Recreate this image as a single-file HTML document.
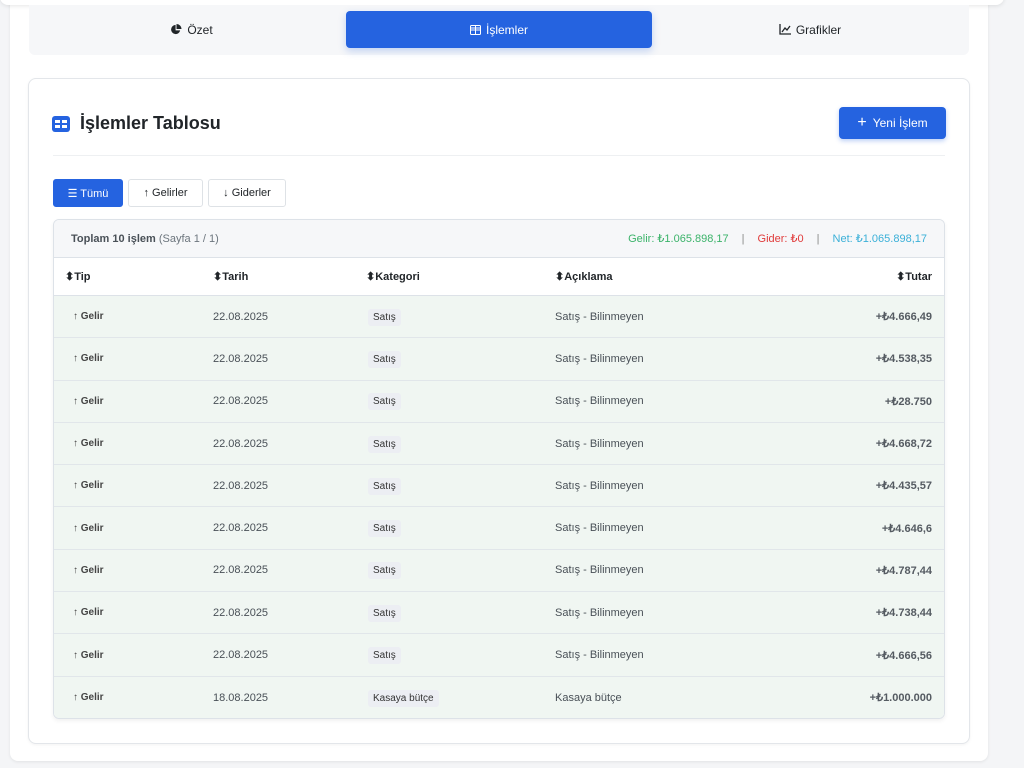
<!DOCTYPE html>
<html><head><meta charset="utf-8"><style>
*{box-sizing:border-box;margin:0;padding:0}
body{width:1024px;height:768px;background:#f4f5f7;font-family:"Liberation Sans",sans-serif;position:relative;overflow:hidden;color:#212529}
.topcard{position:absolute;left:0;top:-10px;width:1004px;height:15px;background:#fff;border-radius:0 0 8px 8px;box-shadow:0 1px 4px rgba(0,0,0,.1)}
.outer{position:absolute;left:10px;top:0;width:978px;height:761px;background:#fff;border-radius:0 0 8px 8px;box-shadow:0 1px 3px rgba(0,0,0,.08)}
.tabs{position:absolute;left:29px;top:5px;width:940px;height:50px;background:#f6f7f9;border-radius:0 0 6px 6px}
.tab{position:absolute;top:6px;height:37px;width:306px;display:flex;align-items:center;justify-content:center;font-size:12px;color:#212529;gap:5px}
.tab.act{background:#2563e0;color:#fff;border-radius:4px;box-shadow:0 3px 8px rgba(37,99,224,.25)}
.inner{position:absolute;left:28px;top:78px;width:942px;height:666px;background:#fff;border:1px solid #e3e6ea;border-radius:8px;box-shadow:0 1px 3px rgba(0,0,0,.05)}
.title{position:absolute;left:23px;top:34px;font-size:18px;font-weight:bold;color:#212529;display:flex;align-items:center;gap:10px}
.newbtn{position:absolute;left:810px;top:28px;width:107px;height:32px;background:#2563e0;border-radius:4px;color:#fff;font-size:12px;display:flex;align-items:center;justify-content:center;gap:6px;box-shadow:0 2px 5px rgba(37,99,224,.3)}
.hr{position:absolute;left:24px;right:24px;top:76px;border-top:1px solid #eef0f2}
.fbtn{position:absolute;top:100px;height:28px;border:1px solid #dee2e6;border-radius:3px;font-size:11px;display:flex;align-items:center;justify-content:center;gap:5px;background:#fff;color:#212529}
.table{position:absolute;left:24px;top:140px;width:892px;height:500px;border:1px solid #dde2e8;border-radius:6px;overflow:hidden;box-shadow:0 2px 4px rgba(0,0,0,.06)}
.sum{height:38px;background:#f6f7f9;border-bottom:1px solid #dde2e8;display:flex;align-items:center;padding:0 17px;font-size:11px}
.hdr,.row{display:flex;align-items:center;position:relative}
.hdr{height:38px;border-bottom:1px solid #dde2e8;font-size:11px;font-weight:bold;background:#fff}
.row{height:42.3px;background:#f0f6f2;border-bottom:1px solid #e1e6ea;font-size:11px;color:#495057}
.row:last-child{border-bottom:none}
.c{position:absolute}
.badge{background:#eceef3;padding:3px 5px;border-radius:3px;font-size:10px;color:#333}
.amt{position:absolute;right:12px;font-weight:bold;color:#555b62}
.g{left:19px;font-size:10px;font-weight:bold;color:#444}
</style></head><body>
<div class="outer"></div>
<div class="topcard"></div>
<div class="tabs">
<div class="tab" style="left:10px"><svg width="11" height="11" viewBox="0 0 12 12"><path d="M5 1a5 5 0 1 0 5 6H5z" fill="#212529"/><path d="M6 0v5.5h5.5A5.5 5.5 0 0 0 6 0z" fill="#212529"/></svg>Özet</div>
<div class="tab act" style="left:317px"><svg width="11" height="10" viewBox="0 0 11 10"><rect x=".5" y=".5" width="10" height="9" rx="1" fill="none" stroke="#fff"/><path d="M.5 5h10M5.5 .5v9M.5 3h10" stroke="#fff"/></svg>İşlemler</div>
<div class="tab" style="left:628px"><svg width="12" height="11" viewBox="0 0 12 11"><path d="M1 0v10h11" fill="none" stroke="#212529" stroke-width="1.3"/><path d="M3 8l3-4 2 2 3-4" fill="none" stroke="#212529" stroke-width="1.3"/></svg>Grafikler</div>
</div>
<div class="inner">
<div class="title"><svg width="18" height="16" viewBox="0 0 18 16"><rect width="18" height="16" rx="3" fill="#2563e0"/><rect x="3" y="4" width="5" height="3" fill="#fff"/><rect x="10" y="4" width="5" height="3" fill="#fff"/><rect x="3" y="9" width="5" height="3" fill="#fff"/><rect x="10" y="9" width="5" height="3" fill="#fff"/></svg>İşlemler Tablosu</div>
<div class="newbtn"><span style="font-size:16px;line-height:1">+</span>Yeni İşlem</div>
<div class="hr"></div>
<div class="fbtn" style="left:24px;width:70px;background:#2563e0;border-color:#2563e0;color:#fff">☰ Tümü</div>
<div class="fbtn" style="left:99px;width:75px">↑ Gelirler</div>
<div class="fbtn" style="left:179px;width:78px">↓ Giderler</div>
<div class="table">
<div class="sum"><b style="color:#495057">Toplam 10 işlem</b>&nbsp;<span style="color:#6c757d">(Sayfa 1 / 1)</span>
<span style="margin-left:auto;color:#3bb36a">Gelir: ₺1.065.898,17</span><span style="color:#888;margin:0 13px">|</span><span style="color:#e03b3b">Gider: ₺0</span><span style="color:#888;margin:0 13px">|</span><span style="color:#3bb0d8">Net: ₺1.065.898,17</span></div>
<div class="hdr"><span class="c" style="left:11px">⬍Tip</span><span class="c" style="left:159px">⬍Tarih</span><span class="c" style="left:312px">⬍Kategori</span><span class="c" style="left:501px">⬍Açıklama</span><span class="c" style="right:12px">⬍Tutar</span></div>
<div class="row"><span class="c g">↑ Gelir</span><span class="c" style="left:159px">22.08.2025</span><span class="c" style="left:314px"><span class="badge">Satış</span></span><span class="c" style="left:501px">Satış - Bilinmeyen</span><span class="amt">+₺4.666,49</span></div>
<div class="row"><span class="c g">↑ Gelir</span><span class="c" style="left:159px">22.08.2025</span><span class="c" style="left:314px"><span class="badge">Satış</span></span><span class="c" style="left:501px">Satış - Bilinmeyen</span><span class="amt">+₺4.538,35</span></div>
<div class="row"><span class="c g">↑ Gelir</span><span class="c" style="left:159px">22.08.2025</span><span class="c" style="left:314px"><span class="badge">Satış</span></span><span class="c" style="left:501px">Satış - Bilinmeyen</span><span class="amt">+₺28.750</span></div>
<div class="row"><span class="c g">↑ Gelir</span><span class="c" style="left:159px">22.08.2025</span><span class="c" style="left:314px"><span class="badge">Satış</span></span><span class="c" style="left:501px">Satış - Bilinmeyen</span><span class="amt">+₺4.668,72</span></div>
<div class="row"><span class="c g">↑ Gelir</span><span class="c" style="left:159px">22.08.2025</span><span class="c" style="left:314px"><span class="badge">Satış</span></span><span class="c" style="left:501px">Satış - Bilinmeyen</span><span class="amt">+₺4.435,57</span></div>
<div class="row"><span class="c g">↑ Gelir</span><span class="c" style="left:159px">22.08.2025</span><span class="c" style="left:314px"><span class="badge">Satış</span></span><span class="c" style="left:501px">Satış - Bilinmeyen</span><span class="amt">+₺4.646,6</span></div>
<div class="row"><span class="c g">↑ Gelir</span><span class="c" style="left:159px">22.08.2025</span><span class="c" style="left:314px"><span class="badge">Satış</span></span><span class="c" style="left:501px">Satış - Bilinmeyen</span><span class="amt">+₺4.787,44</span></div>
<div class="row"><span class="c g">↑ Gelir</span><span class="c" style="left:159px">22.08.2025</span><span class="c" style="left:314px"><span class="badge">Satış</span></span><span class="c" style="left:501px">Satış - Bilinmeyen</span><span class="amt">+₺4.738,44</span></div>
<div class="row"><span class="c g">↑ Gelir</span><span class="c" style="left:159px">22.08.2025</span><span class="c" style="left:314px"><span class="badge">Satış</span></span><span class="c" style="left:501px">Satış - Bilinmeyen</span><span class="amt">+₺4.666,56</span></div>
<div class="row"><span class="c g">↑ Gelir</span><span class="c" style="left:159px">18.08.2025</span><span class="c" style="left:314px"><span class="badge">Kasaya bütçe</span></span><span class="c" style="left:501px">Kasaya bütçe</span><span class="amt">+₺1.000.000</span></div>
</div>
</div>
</body></html>
